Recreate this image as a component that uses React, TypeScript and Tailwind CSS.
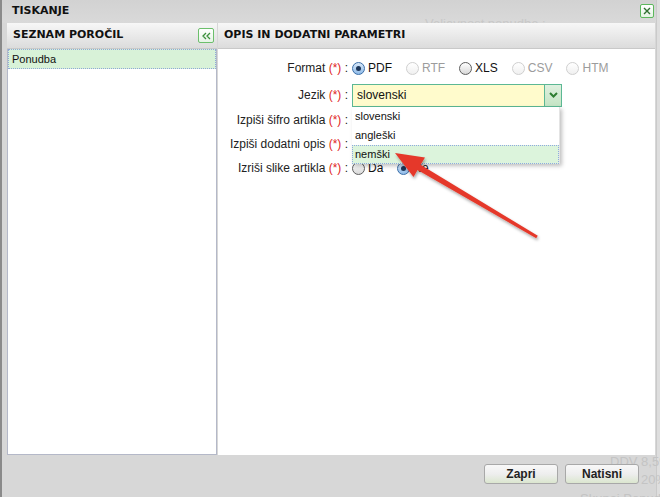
import React from 'react';

type RadioProps = { checked?: boolean; disabled?: boolean };

const Radio: React.FC<RadioProps> = ({ checked, disabled }) => {
  if (checked) {
    return (
      <span className="w-[13px] h-[13px] rounded-full border border-[#3a6ea8] bg-gradient-to-b from-[#d9e8f8] to-[#8fbbe8] flex items-center justify-center shrink-0">
        <span className="w-[5px] h-[5px] rounded-full bg-[#1d3557]" />
      </span>
    );
  }
  if (disabled) {
    return <span className="w-[13px] h-[13px] rounded-full border border-[#cfcfcf] bg-gradient-to-b from-white to-[#f0f0f0] shrink-0" />;
  }
  return <span className="w-[13px] h-[13px] rounded-full border border-[#5e5e5e] bg-gradient-to-b from-white to-[#d8d8d8] shrink-0" />;
};

const Option: React.FC<{ label: string; checked?: boolean; disabled?: boolean }> = ({ label, checked, disabled }) => (
  <span className="flex items-center gap-[3px]">
    <Radio checked={checked} disabled={disabled} />
    <span className={disabled ? 'text-[#9c9c9c]' : 'text-[#111]'}>{label}</span>
  </span>
);

const Label: React.FC<{ text: string }> = ({ text }) => (
  <span className="w-[134px] shrink-0 text-right pr-[4px] text-[#222] whitespace-nowrap">
    {text} <span className="text-[#e02424]">(*)</span> :
  </span>
);

const App: React.FC = () => {
  const languages = ['slovenski', 'angleški', 'nemški'];

  return (
    <div className="relative w-[660px] h-[497px] overflow-hidden flex bg-[#d7d7d7] font-['Liberation_Sans',Arial,sans-serif] text-[12px]">
      <div className="w-[2px] bg-[#8a8a8a]" />

      {/* dialog */}
      <div className="w-[654px] flex flex-col">
        <div className="relative h-[23px] overflow-hidden flex items-center pl-[10px] bg-gradient-to-b from-[#d2d2d2] to-[#d9d9d9]">
          <span className="font-['DejaVu_Sans',Verdana,sans-serif] font-bold text-[11px] text-[#111]">TISKANJE</span>
          <span className="absolute left-[423px] top-[14px] text-[13px] text-[#c8c8c8] whitespace-nowrap">Veljavnost ponudbe :</span>
          <button className="absolute right-[2px] top-[4px] w-[14px] h-[14px] rounded-[2px] border border-[#5cb85c] bg-gradient-to-b from-white to-[#e4f3e4] flex items-center justify-center">
            <svg width="8" height="8" viewBox="0 0 8 8">
              <path d="M1 1L7 7M7 1L1 7" stroke="#2f6f2f" strokeWidth="1.4" />
            </svg>
          </button>
        </div>

        <div className="h-[432px] flex pl-[5px] pr-[1px]">
          {/* left panel */}
          <div className="w-[210px] flex flex-col">
            <div className="h-[26px] flex items-center justify-between pl-[6px] pr-[3px] bg-gradient-to-b from-[#f7f7f7] to-[#dcdcdc] border-b border-[#c9c9c9]">
              <span className="font-['DejaVu_Sans',Verdana,sans-serif] font-bold text-[11px] text-[#111]">SEZNAM POROČIL</span>
              <button className="w-[16px] h-[15px] rounded-[2px] border border-[#6cbf6c] bg-gradient-to-b from-white to-[#e6f4e6] flex items-center justify-center">
                <svg width="9" height="8" viewBox="0 0 9 8">
                  <path d="M4 1L1 4L4 7M8 1L5 4L8 7" fill="none" stroke="#3b8f3b" strokeWidth="1.3" />
                </svg>
              </button>
            </div>
            <div className="flex-1 bg-white border-x border-b border-[#b4b8c8]">
              <div className="h-[20px] flex items-center pl-[3px] bg-[#d8f2d8] border border-dotted border-[#8fa9d8] text-[11px] text-[#111]">
                Ponudba
              </div>
            </div>
          </div>

          {/* right panel */}
          <div className="flex-1 ml-[1px] flex flex-col">
            <div className="h-[26px] flex items-center pl-[6px] bg-gradient-to-b from-[#f7f7f7] to-[#dcdcdc] border-b border-[#c9c9c9]">
              <span className="font-['DejaVu_Sans',Verdana,sans-serif] font-bold text-[11px] text-[#111]">OPIS IN DODATNI PARAMETRI</span>
            </div>
            <div className="flex-1 bg-white pt-[7px]">
              <div className="h-6 flex items-center">
                <Label text="Format" />
                <div className="flex items-center gap-[14px]">
                  <Option label="PDF" checked />
                  <Option label="RTF" disabled />
                  <Option label="XLS" />
                  <Option label="CSV" disabled />
                  <Option label="HTM" disabled />
                </div>
              </div>

              <div className="mt-[3px] h-6 flex items-center relative z-10">
                <Label text="Jezik" />
                <div className="relative">
                  <div className="w-[210px] h-[23px] flex border border-[#5cb894] bg-[#fffbcc]">
                    <span className="flex-1 flex items-center pl-[4px] text-[12px] text-[#111]">slovenski</span>
                    <span className="w-[17px] flex items-center justify-center border-l border-[#5cb894] bg-gradient-to-b from-[#dff0df] to-[#c4e4c4]">
                      <svg width="9" height="6" viewBox="0 0 9 6">
                        <path d="M1 1L4.5 4.5L8 1" fill="none" stroke="#2e7d32" strokeWidth="2" />
                      </svg>
                    </span>
                  </div>
                  <div className="absolute left-0 top-[23px] w-[208px] bg-white shadow-[2px_2px_4px_rgba(0,0,0,0.25)] border-r border-[#e4e4e4]">
                    {languages.map((lang, i) => (
                      <div
                        key={lang}
                        className={
                          i === 2
                            ? 'h-[19px] flex items-center pl-[2px] text-[11px] text-[#111] bg-[#dcf4dc] border border-dotted border-[#8fa9e0]'
                            : 'h-[19px] flex items-center pl-[3px] text-[11px] text-[#111]'
                        }
                      >
                        {lang}
                      </div>
                    ))}
                  </div>
                </div>
              </div>

              {/* rows under the open list: only the radios, the list covers them */}
              <div className="mt-[1px] h-6 flex items-center">
                <Label text="Izpiši šifro artikla" />
                <div className="flex items-center gap-[35px]">
                  <Radio />
                  <Radio checked />
                </div>
              </div>

              <div className="h-[23px] flex items-center">
                <Label text="Izpiši dodatni opis" />
                <div className="flex items-center gap-[35px]">
                  <Radio />
                  <Radio checked />
                </div>
              </div>

              <div className="mt-[1px] h-6 flex items-center">
                <Label text="Izriši slike artikla" />
                <div className="flex items-center gap-[14px]">
                  <Option label="Da" />
                  <Option label="Ne" checked />
                </div>
              </div>
            </div>
          </div>
        </div>

        <div className="relative flex-1 flex justify-end items-start pt-[9px] pr-[17px] gap-[7px]">
          <span className="absolute left-[608px] top-[-3px] text-[13px] text-[#c4c4c4] whitespace-nowrap">DDV 8,5%</span>
          <span className="absolute left-[639px] top-[15px] text-[13px] text-[#c4c4c4] whitespace-nowrap">20%</span>
          <span className="absolute left-[578px] top-[34px] text-[13px] text-[#c4c4c4] whitespace-nowrap">Skupaj Ponudb</span>
          <button className="relative w-[74px] h-[20px] rounded-[3px] border border-[#a8a8a8] bg-gradient-to-b from-[#f8f8f8] via-[#eeeeee] to-[#dbe6cf] font-bold text-[12px] text-[#222]">
            Zapri
          </button>
          <button className="relative w-[74px] h-[20px] rounded-[3px] border border-[#a8a8a8] bg-gradient-to-b from-[#f8f8f8] via-[#eeeeee] to-[#dbe6cf] font-bold text-[12px] text-[#222]">
            Natisni
          </button>
        </div>
      </div>

      <div className="flex-1 bg-[#dedede] border-l border-[#cacaca]" />

      {/* annotation arrow */}
      <svg className="absolute left-0 top-0 z-20 pointer-events-none" width="660" height="497" viewBox="0 0 660 497">
        <defs>
          <filter id="sh" x="-20%" y="-20%" width="140%" height="140%">
            <feDropShadow dx="1" dy="2" stdDeviation="1.5" floodColor="#000" floodOpacity="0.35" />
          </filter>
        </defs>
        <polygon
          points="395,153 425,157.5 420.6,164.7 537.8,235.7 536.2,238.3 417.6,169.9 413.5,177"
          fill="#e5392a"
          filter="url(#sh)"
        />
      </svg>
    </div>
  );
};

export default App;
